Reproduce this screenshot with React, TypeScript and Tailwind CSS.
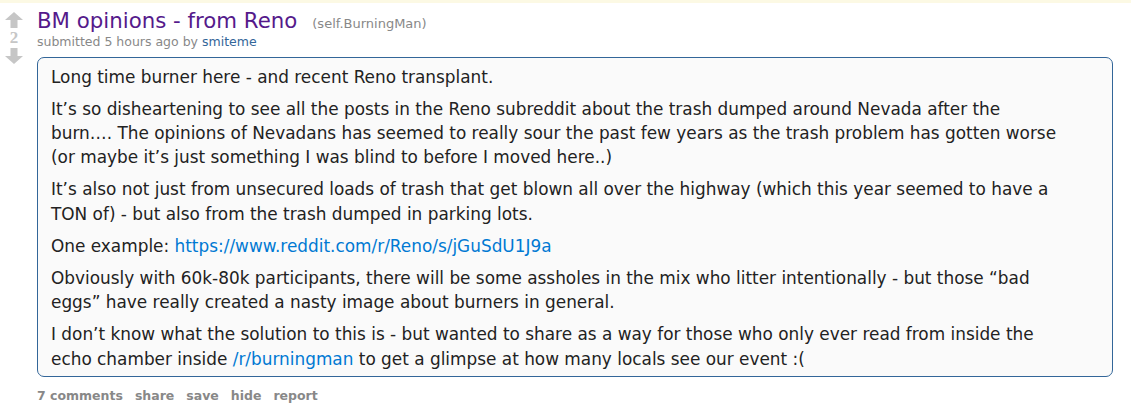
import { type ReactNode } from "react";

const font = { fontFamily: '"DejaVu Sans", Verdana, sans-serif' };

const Arrow = ({ down }: { down?: boolean }) => (
  <svg width="18" height="16" viewBox="0 0 18 16" className={down ? "rotate-180" : ""}>
    <path d="M9 0 L18 8 L12.5 8 L12.5 16 L5.5 16 L5.5 8 L0 8 Z" fill="#c6c6c6" />
  </svg>
);

// lines are broken where the original post wraps
const P = ({ lines }: { lines: ReactNode[] }) => (
  <p className="mb-[8px] last:mb-0">
    {lines.map((l, i) => (
      <span key={i} className="block whitespace-nowrap">{l}</span>
    ))}
  </p>
);

const Link = ({ children }: { children: ReactNode }) => <a className="text-[#0079d3]">{children}</a>;

export default function App() {
  return (
    <div className="w-[1131px] h-[408px] bg-white overflow-hidden" style={font}>
      <div className="h-[3px] bg-[#fcf9e4]" />
      <div className="flex">
        <div className="w-[37px] flex flex-col items-center pt-[9px] pr-[9px]">
          <Arrow />
          <div className="text-[17px] leading-[20px] text-[#c6c6c6] font-bold" style={{ fontFamily: '"Liberation Serif", serif' }}>2</div>
          <Arrow down />
        </div>
        <div className="flex-1 pr-[18px]">
          <div className="flex items-baseline pt-[5px]">
            <span className="text-[21.3px] leading-[25px] text-[#551a8b]">BM opinions - from Reno</span>
            <span className="ml-[15px] text-[13px] text-[#888]">(self.BurningMan)</span>
          </div>
          <div className="text-[12.5px] leading-[16px] text-[#888]">
            submitted 5 hours ago by <span className="text-[#369]">smiteme</span>
          </div>
          <div className="mt-[7px] border border-[#369] rounded-[7px] bg-[#fafafa] pl-[13px] pr-[8px] pt-[7px] pb-[5px] text-[16.9px] leading-[24.2px] text-[#222]">
            <P lines={["Long time burner here - and recent Reno transplant."]} />
            <P
              lines={[
                "It’s so disheartening to see all the posts in the Reno subreddit about the trash dumped around Nevada after the",
                "burn…. The opinions of Nevadans has seemed to really sour the past few years as the trash problem has gotten worse",
                "(or maybe it’s just something I was blind to before I moved here..)",
              ]}
            />
            <P
              lines={[
                "It’s also not just from unsecured loads of trash that get blown all over the highway (which this year seemed to have a",
                "TON of) - but also from the trash dumped in parking lots.",
              ]}
            />
            <P lines={[<>One example: <Link>https://www.reddit.com/r/Reno/s/jGuSdU1J9a</Link></>]} />
            <P
              lines={[
                "Obviously with 60k-80k participants, there will be some assholes in the mix who litter intentionally - but those “bad",
                "eggs” have really created a nasty image about burners in general.",
              ]}
            />
            <P
              lines={[
                "I don’t know what the solution to this is - but wanted to share as a way for those who only ever read from inside the",
                <>echo chamber inside <Link>/r/burningman</Link> to get a glimpse at how many locals see our event :(</>,
              ]}
            />
          </div>
          <div className="flex gap-[12px] mt-[11px] text-[12.5px] leading-[16px] font-bold text-[#888]">
            <span>7 comments</span>
            <span>share</span>
            <span>save</span>
            <span>hide</span>
            <span>report</span>
          </div>
        </div>
      </div>
    </div>
  );
}
